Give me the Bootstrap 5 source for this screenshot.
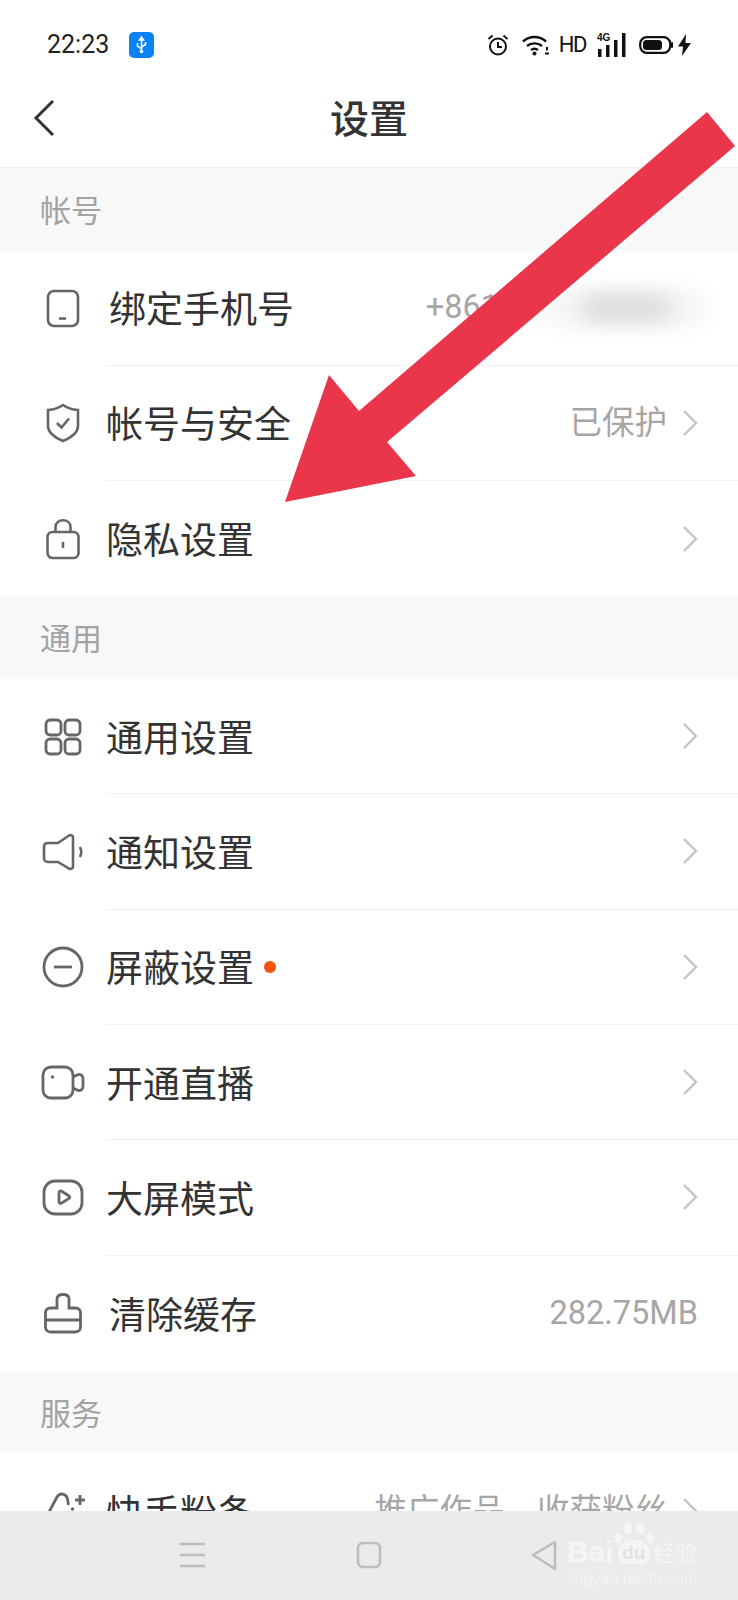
<!DOCTYPE html>
<html lang="zh-CN">
<head>
<meta charset="UTF-8">
<meta name="viewport" content="width=device-width, initial-scale=1.0">
<title>设置</title>
<link rel="stylesheet" href="https://cdn.jsdelivr.net/npm/bootstrap@5.3.0/dist/css/bootstrap.min.css">
<style>
    body { width: 738px; height: 1600px; overflow: hidden; background: #fff; font-family: "Noto Sans CJK SC", "Noto Sans", sans-serif; color: #333; }
    .screen { height: 1600px; }
    .status-bar { height: 88px; padding: 2px 47px 0 47px; }
    .clock { font-family: Roboto, sans-serif; font-size: 25px; color: #222; width: 82px; }
    .status-hd { font-family: "Liberation Sans Narrow", Roboto, sans-serif; font-size: 22px; line-height: 1; color: #111; margin: 0 11px 0 9px; letter-spacing: -1.5px; }
    .gap-wifi { margin-left: 13px; }
    .gap-bat { margin-left: 12px; }
    .gap-bolt { margin-left: 5px; }
    .top-bar { height: 80px; border-bottom: 1px solid #eee; padding-bottom: 22px; }
    .back-btn { left: 33px; top: 11px; }
    .page-title { font-size: 39px; font-weight: 500; line-height: 1; color: #333; }
    .group-title { height: 82.5px; background: #f8f8f8; color: #a3a3a3; font-size: 31px; padding-left: 40px; }
    .set-row { height: 115.33px; background: #fff; border: 0; padding: 0; color: #333; border-radius: 0 !important; }
    .row-icon { width: 106px; padding-left: 40px; flex: none; }
    .icon-box { width: 46px; }
    .row-inner { border-bottom: 1px solid #f1f1f1; padding-right: 40px; min-width: 0; }
    .set-row:last-child .row-inner { border-bottom: 0; }
    .row-name { font-size: 37px; line-height: 1; }
    .shift-name { margin-left: 3px; }
    .row-value { font-family: Roboto, "Noto Sans CJK SC", sans-serif; font-size: 32.5px; color: #a6a6a6; line-height: 1; }
    .chev { margin-left: 15px; flex: none; }
    .new-dot { width: 12px; height: 12px; border-radius: 50%; background: #f4530c; margin-left: 10px; }
    .phone-blur { width: 174px; height: 34px; flex: none; margin: 0 -9px 0 34px; filter: blur(10px); border-radius: 16px; background: linear-gradient(90deg, #f8f8f8 0, #f5f5f5 22%, #dcdcdc 36%, #dedede 72%, #f4f4f4 86%, #f8f8f8 100%); }
    .list-scroll { min-height: 0; }
    .nav-strip { height: 89px; background: #ebebeb; }
    .nav-slot { left: 0; top: 0; }
    .arrow-over { left: 0; top: 0; pointer-events: none; }
    .wm { left: 567px; top: 1537px; width: 132px; color: #f5f5f5; }
    .wm-main { font-family: "Liberation Sans", sans-serif; font-size: 30px; font-weight: 700; line-height: 30px; }
    .wm-du { font-family: "Liberation Sans", sans-serif; font-size: 19px; font-weight: 700; line-height: 21px; width: 32px; height: 24px; margin: 3px 4px 0 4px; padding-top: 2px; border-radius: 14px 14px 9px 9px; background: #f5f5f5; color: #e2e2e2; text-align: center; }
    .wm-cn { font-size: 21.5px; line-height: 30px; }
    .wm-url { font-family: "Liberation Sans", sans-serif; font-size: 16.2px; line-height: 18px; margin-top: 2px; color: #f3f3f3; }
    .paw { left: 46px; top: -16px; }
</style>
</head>
<body>
<div class="screen d-flex flex-column position-relative">

    <div class="status-bar d-flex align-items-center flex-shrink-0">
        <span class="clock">22:23</span>
        <svg width="25" height="26" viewBox="0 0 25 26"><rect width="25" height="26" rx="5" fill="#0a84f5"/><path d="M12.500 5v15M12.500 5l-2 3h4zM12.500 17l-4-3v-3M12.500 15l4-2.500v-2.500" fill="none" stroke="#fff" stroke-width="1.500"/><circle cx="12.500" cy="19.500" r="1.800" fill="#fff"/></svg>
        <div class="ms-auto d-flex align-items-center">
            <svg width="22" height="22" viewBox="0 0 22 22" fill="none" stroke="#111" stroke-width="2"><circle cx="11" cy="12.500" r="8"/><path d="M11 8v5h4"/><path d="M1.500 5l4-3.500M20.500 5l-4-3.500"/></svg>
            <svg class="gap-wifi" width="28" height="22" viewBox="0 0 28 22" fill="none" stroke="#111" stroke-width="2.400"><path d="M1 7.500c6.500-6 16.500-6 23 0M5 12c4-3.500 11-3.500 15 0M9 16c2-1.500 5-1.500 7 0"/><circle cx="12.500" cy="19.500" r="2" fill="#111" stroke="none"/><path d="M25 13v3.500M23 19.500h4" stroke-width="2"/></svg>
            <span class="status-hd">HD</span>
            <svg width="30" height="26" viewBox="0 0 30 26"><text x="0" y="9" font-family="Liberation Sans, sans-serif" font-size="10" font-weight="700" fill="#111">4G</text><rect x="1" y="17" width="3.500" height="8" fill="#111"/><rect x="9" y="13" width="3.500" height="12" fill="#111"/><rect x="17" y="8" width="3.500" height="17" fill="#111"/><rect x="25" y="1" width="3.500" height="24" fill="#111"/></svg>
            <svg class="gap-bat" width="34" height="18" viewBox="0 0 34 18"><rect x="1.200" y="1.200" width="30" height="15.600" rx="6.500" fill="none" stroke="#111" stroke-width="2.200"/><rect x="4" y="4" width="19" height="10" rx="3.500" fill="#111"/><rect x="32" y="6" width="2" height="6" rx="1" fill="#111"/></svg>
            <svg class="gap-bolt" width="13" height="22" viewBox="0 0 13 22"><path d="M8 0L0 12.500h5L4 22l9-13H7.500z" fill="#111"/></svg>
        </div>
    </div>

    <div class="top-bar d-flex align-items-center justify-content-center position-relative flex-shrink-0">
        <svg class="back-btn position-absolute" width="24" height="38" viewBox="0 0 24 38" fill="none" stroke="#333" stroke-width="3"><path d="M20 2L3 19l17 17"/></svg>
        <span class="page-title">设置</span>
    </div>

    <div class="list-scroll flex-grow-1 overflow-hidden">
        <div class="group-title d-flex align-items-center">帐号</div>
        <ul class="list-group list-group-flush">
            <li class="list-group-item set-row d-flex">
                <div class="row-icon d-flex align-items-center"><div class="icon-box d-flex justify-content-center"><svg width="34" height="39" viewBox="0 0 34 39" fill="none" stroke="#666" stroke-width="2.600"><rect x="2" y="2" width="30" height="35" rx="6"/><path d="M13 29.500h7"/></svg></div></div>
                <div class="row-inner flex-grow-1 d-flex align-items-center">
                    <span class="row-name shift-name">绑定手机号</span>
                    <span class="row-value ms-auto">+861</span>
                    <div class="phone-blur"></div>
                </div>
            </li>
            <li class="list-group-item set-row d-flex">
                <div class="row-icon d-flex align-items-center"><div class="icon-box d-flex justify-content-center"><svg width="36" height="40" viewBox="0 0 36 40" fill="none" stroke="#666" stroke-width="2.600"><path d="M18 2c4 3 8 4.500 15 5v16c0 7-8 12-15 15C11 35 3 30 3 23V7c7-.5 11-2 15-5z"/><path d="M12 20l4.500 4.500L24 15.500"/></svg></div></div>
                <div class="row-inner flex-grow-1 d-flex align-items-center">
                    <span class="row-name">帐号与安全</span>
                    <span class="row-value ms-auto">已保护</span>
                    <svg class="chev" width="16" height="28" viewBox="0 0 16 28" fill="none" stroke="#c4c4c4" stroke-width="2.400"><path d="M2 2l12 12L2 26"/></svg>
                </div>
            </li>
            <li class="list-group-item set-row d-flex">
                <div class="row-icon d-flex align-items-center"><div class="icon-box d-flex justify-content-center"><svg width="36" height="42" viewBox="0 0 36 42" fill="none" stroke="#666" stroke-width="2.600"><rect x="2.500" y="14" width="31" height="26" rx="5"/><path d="M10.500 14V9c0-9 15-9 15 0v5"/><path d="M18 24v6"/></svg></div></div>
                <div class="row-inner flex-grow-1 d-flex align-items-center">
                    <span class="row-name">隐私设置</span>
                    <svg class="chev ms-auto" width="16" height="28" viewBox="0 0 16 28" fill="none" stroke="#c4c4c4" stroke-width="2.400"><path d="M2 2l12 12L2 26"/></svg>
                </div>
            </li>
        </ul>

        <div class="group-title d-flex align-items-center">通用</div>
        <ul class="list-group list-group-flush">
            <li class="list-group-item set-row d-flex">
                <div class="row-icon d-flex align-items-center"><div class="icon-box d-flex justify-content-center"><svg width="38" height="38" viewBox="0 0 38 38" fill="none" stroke="#666" stroke-width="2.800"><rect x="2" y="2" width="15" height="15" rx="4"/><rect x="21" y="2" width="15" height="15" rx="4"/><rect x="2" y="21" width="15" height="15" rx="4"/><rect x="21" y="21" width="15" height="15" rx="4"/></svg></div></div>
                <div class="row-inner flex-grow-1 d-flex align-items-center">
                    <span class="row-name">通用设置</span>
                    <svg class="chev ms-auto" width="16" height="28" viewBox="0 0 16 28" fill="none" stroke="#c4c4c4" stroke-width="2.400"><path d="M2 2l12 12L2 26"/></svg>
                </div>
            </li>
            <li class="list-group-item set-row d-flex">
                <div class="row-icon d-flex align-items-center"><div class="icon-box d-flex justify-content-center"><svg width="42" height="38" viewBox="0 0 42 38" fill="none" stroke="#666" stroke-width="2.600"><path d="M6 10h10L27 2.500c2-1 4 0 4 2v29c0 2-2 3-4 2L16 29H6c-2.500 0-4-1.500-4-4V14c0-2.500 1.500-4 4-4z"/><path d="M38 14c1.500 3 1.500 7 0 10"/></svg></div></div>
                <div class="row-inner flex-grow-1 d-flex align-items-center">
                    <span class="row-name">通知设置</span>
                    <svg class="chev ms-auto" width="16" height="28" viewBox="0 0 16 28" fill="none" stroke="#c4c4c4" stroke-width="2.400"><path d="M2 2l12 12L2 26"/></svg>
                </div>
            </li>
            <li class="list-group-item set-row d-flex">
                <div class="row-icon d-flex align-items-center"><div class="icon-box d-flex justify-content-center"><svg width="42" height="42" viewBox="0 0 42 42" fill="none" stroke="#666" stroke-width="2.800"><circle cx="21" cy="21" r="19"/><path d="M12 21h18"/></svg></div></div>
                <div class="row-inner flex-grow-1 d-flex align-items-center">
                    <span class="row-name">屏蔽设置</span>
                    <span class="new-dot"></span>
                    <svg class="chev ms-auto" width="16" height="28" viewBox="0 0 16 28" fill="none" stroke="#c4c4c4" stroke-width="2.400"><path d="M2 2l12 12L2 26"/></svg>
                </div>
            </li>
            <li class="list-group-item set-row d-flex">
                <div class="row-icon d-flex align-items-center"><div class="icon-box d-flex justify-content-center"><svg width="44" height="35" viewBox="0 0 44 35" fill="none" stroke="#666" stroke-width="2.800"><rect x="2" y="2" width="30" height="31" rx="8"/><path d="M32 12l4-2c3-1.500 6 .5 6 3.500v8c0 3-3 5-6 3.500l-4-2"/><circle cx="11.500" cy="12" r="1.700" fill="#666" stroke="none"/></svg></div></div>
                <div class="row-inner flex-grow-1 d-flex align-items-center">
                    <span class="row-name">开通直播</span>
                    <svg class="chev ms-auto" width="16" height="28" viewBox="0 0 16 28" fill="none" stroke="#c4c4c4" stroke-width="2.400"><path d="M2 2l12 12L2 26"/></svg>
                </div>
            </li>
            <li class="list-group-item set-row d-flex">
                <div class="row-icon d-flex align-items-center"><div class="icon-box d-flex justify-content-center"><svg width="42" height="37" viewBox="0 0 42 37" fill="none" stroke="#666" stroke-width="2.800"><rect x="2" y="2" width="38" height="33" rx="11"/><path d="M17 14c0-2 1.500-2.500 3-1.500l7 4.500c1 .8 1 1.600 0 2.400l-7 4.500c-1.500 1-3 .5-3-1.500z"/></svg></div></div>
                <div class="row-inner flex-grow-1 d-flex align-items-center">
                    <span class="row-name">大屏模式</span>
                    <svg class="chev ms-auto" width="16" height="28" viewBox="0 0 16 28" fill="none" stroke="#c4c4c4" stroke-width="2.400"><path d="M2 2l12 12L2 26"/></svg>
                </div>
            </li>
            <li class="list-group-item set-row d-flex">
                <div class="row-icon d-flex align-items-center"><div class="icon-box d-flex justify-content-center"><svg width="38" height="41" viewBox="0 0 38 41" fill="none" stroke="#666" stroke-width="2.800"><path d="M13 15V6c0-3.500 2.500-4.500 6-4.500s6 1 6 4.500v9h6.500c3 0 5 2 5 4.500V34c0 3-2 5-5 5H6.500c-3 0-5-2-5-5V19.500c0-2.500 2-4.500 5-4.500z"/><path d="M1.500 27h35"/></svg></div></div>
                <div class="row-inner flex-grow-1 d-flex align-items-center">
                    <span class="row-name shift-name">清除缓存</span>
                    <span class="row-value ms-auto">282.75MB</span>
                </div>
            </li>
        </ul>

        <div class="group-title d-flex align-items-center">服务</div>
        <ul class="list-group list-group-flush">
            <li class="list-group-item set-row d-flex">
                <div class="row-icon d-flex align-items-center"><div class="icon-box d-flex justify-content-center"><svg width="46" height="42" viewBox="0 0 46 42" fill="none" stroke="#666" stroke-width="2.800"><path d="M8 24L17 7c3-4.500 9-4 10.500 2l1 6"/><circle cx="32.500" cy="19" r="1.700" fill="#666" stroke="none"/><path d="M35 10h10M40 5v10"/></svg></div></div>
                <div class="row-inner flex-grow-1 d-flex align-items-center">
                    <span class="row-name">快手粉条</span>
                    <span class="row-value ms-auto">推广作品，收获粉丝</span>
                    <svg class="chev" width="16" height="28" viewBox="0 0 16 28" fill="none" stroke="#c4c4c4" stroke-width="2.400"><path d="M2 2l12 12L2 26"/></svg>
                </div>
            </li>
        </ul>
    </div>

    <div class="nav-strip d-flex align-items-center position-relative flex-shrink-0">
        <svg class="position-absolute nav-slot" width="738" height="89" viewBox="0 0 738 89" fill="none" stroke="#bdbdbd" stroke-width="2.600"><path d="M180 33h25M180 44h25M180 55h25"/><rect x="358" y="32" width="22" height="24" rx="5"/><path d="M555 31L533 44l22 14z" stroke-linejoin="round"/></svg>
    </div>

    <svg class="arrow-over position-absolute" width="738" height="1600" viewBox="0 0 738 1600"><polygon points="707,112 735,146 387,442 416,476 285,502 329,375 359,411" fill="#ea364b"/></svg>

    <div class="wm position-absolute">
        <svg class="paw position-absolute" width="44" height="28" viewBox="0 0 44 28" fill="#f5f5f5"><ellipse cx="5" cy="17" rx="4" ry="5"/><ellipse cx="15" cy="7" rx="4.500" ry="6"/><ellipse cx="27" cy="7" rx="4.500" ry="6"/><ellipse cx="37" cy="17" rx="4" ry="5"/></svg>
        <div class="d-flex text-nowrap"><span class="wm-main">Bai</span><span class="wm-du">du</span><span class="wm-cn">经验</span></div>
        <div class="wm-url text-nowrap">jingyan.baidu.com</div>
    </div>
</div>
<script src="https://cdn.jsdelivr.net/npm/bootstrap@5.3.0/dist/js/bootstrap.bundle.min.js"></script>
</body>
</html>
